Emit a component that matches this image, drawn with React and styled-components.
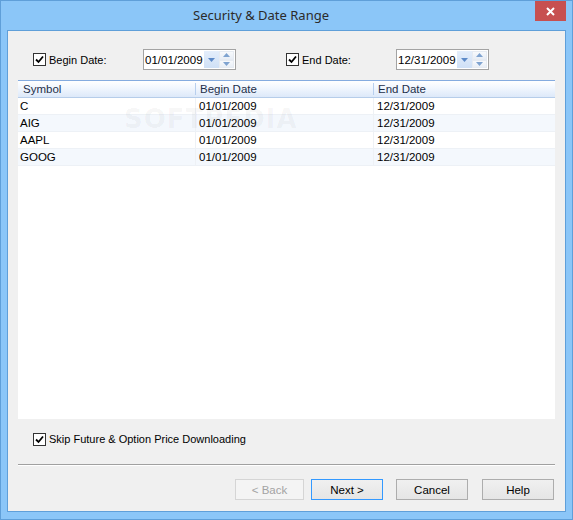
import React from "react";
import styled, { createGlobalStyle } from "styled-components";

const GlobalStyle = createGlobalStyle`
  html, body {
    margin: 0;
    padding: 0;
    background: #ffffff;
  }
  body {
    font-family: "Liberation Sans", Arial, sans-serif;
    font-size: 11px;
    color: #000;
  }
`;

// ================= WINDOW FRAME =================
const Window = styled.div`
  width: 573px;
  height: 520px;
  box-sizing: border-box;
  background: #8bc6f8;
  border: 1px solid #5f9fd9;
  display: flex;
  flex-direction: column;
`;

const TitleBar = styled.div`
  position: relative;
  height: 29px;
  flex-shrink: 0;
  display: flex;
  align-items: center;
  justify-content: center;
  padding-right: 51px;
`;

const TitleText = styled.div`
  font-family: "Noto Sans", "Open Sans", sans-serif;
  font-size: 13px;
  color: #2b2b2b;
  margin-bottom: 1px;
`;

const CloseButton = styled.div`
  position: absolute;
  top: 0;
  right: 6px;
  width: 31px;
  height: 20px;
  background: #c75050;
  display: flex;
  align-items: center;
  justify-content: center;
`;

const Client = styled.div`
  flex: 1;
  margin: 0 6px 7px 6px;
  background: #f0f0f0;
  border: 1px solid #5f9fd9;
  display: flex;
  flex-direction: column;
  padding: 0 10px 0 10px;
`;

// ================= DATE ROW =================
const DateRow = styled.div`
  display: flex;
  align-items: center;
  height: 21px;
  margin-top: 18px;
  padding-left: 15px;
`;

const CheckLabel = styled.label`
  display: flex;
  align-items: center;
  gap: 3px;
  width: ${({ $width }) => $width || "auto"};
  flex-shrink: 0;
  color: #000;
`;

const Box = styled.span`
  width: 11px;
  height: 11px;
  border: 1px solid #333333;
  background: #ffffff;
  display: flex;
  align-items: center;
  justify-content: center;
`;

const DateBox = styled.div`
  width: 93px;
  height: 21px;
  box-sizing: border-box;
  border: 1px solid #a3a3a3;
  background: #fff;
  display: flex;
  align-items: stretch;
  margin-right: ${({ $mr }) => $mr || "0"};
  flex-shrink: 0;
`;

const DateText = styled.div`
  flex: 1;
  padding-left: 1px;
  display: flex;
  align-items: center;
  font-size: 11.5px;
`;

const DropBtn = styled.div`
  width: 15px;
  margin: 1px 0;
  background: linear-gradient(#e4eefb, #cfe0f6);
  display: flex;
  align-items: center;
  justify-content: center;
`;

const Spinner = styled.div`
  width: 15px;
  margin: 1px 1px 1px 0;
  display: flex;
  flex-direction: column;
`;

const SpinHalf = styled.div`
  flex: 1;
  background: linear-gradient(#f7f9fc, #e8eef6);
  border: 1px solid #e6ebf2;
  display: flex;
  align-items: center;
  justify-content: center;
`;

// ================= TABLE =================
const Table = styled.div`
  position: relative;
  margin-top: 10px;
  height: 339px;
  background: #fff;
  display: flex;
  flex-direction: column;
  overflow: hidden;
`;

const Columns = "177px 178px 1fr";

const HeaderRow = styled.div`
  display: grid;
  grid-template-columns: ${Columns};
  height: 18px;
  box-sizing: border-box;
  border-top: 1px solid #84abdf;
  border-bottom: 1px solid #b6cdea;
  background: linear-gradient(#ffffff 0%, #f2f7fe 40%, #dde9f9 100%);
`;

const HeaderCell = styled.div`
  display: flex;
  align-items: center;
  padding-left: ${({ $pl }) => $pl || "4px"};
  color: #1e2f4a;
  font-size: 11.5px;
  border-left: ${({ $first }) => ($first ? "none" : "1px solid #b8cfee")};
  margin: ${({ $first }) => ($first ? "0" : "2px 0")};
`;

const DataRow = styled.div`
  display: grid;
  grid-template-columns: ${Columns};
  height: 17px;
  box-sizing: border-box;
  background: ${({ $alt }) => ($alt ? "#f4f8fd" : "#ffffff")};
  border-bottom: 1px solid #edf1f6;
`;

const DataCell = styled.div`
  display: flex;
  align-items: center;
  font-size: 11.5px;
  padding-left: ${({ $pl }) => $pl || "3px"};
  border-left: ${({ $first }) => ($first ? "none" : "1px solid #eef1f5")};
`;

const Watermark = styled.div`
  position: absolute;
  left: 106px;
  top: 24px;
  font-family: "DejaVu Sans", sans-serif;
  font-weight: bold;
  font-size: 26px;
  letter-spacing: 1px;
  color: rgba(0, 0, 0, 0.04);
  pointer-events: none;
  user-select: none;
`;

// ================= BOTTOM =================
const SkipRow = styled.div`
  display: flex;
  align-items: center;
  height: 20px;
  margin-top: 10px;
  padding-left: 15px;
`;

const Separator = styled.div`
  height: 0;
  border-top: 1px solid #a0a0a0;
  border-bottom: 1px solid #ffffff;
  margin-top: 15px;
`;

const ButtonBar = styled.div`
  display: flex;
  justify-content: flex-end;
  gap: 7px;
  margin-top: 13px;
  padding-right: 1px;
`;

const Button = styled.div`
  width: ${({ $w }) => $w || "72px"};
  height: 21px;
  box-sizing: border-box;
  border: 1px solid
    ${({ $default, $disabled }) =>
      $default ? "#3399ff" : $disabled ? "#d5d5d5" : "#adadad"};
  background: ${({ $disabled }) =>
    $disabled ? "#f4f4f4" : "linear-gradient(#f0f0f0, #e5e5e5)"};
  color: ${({ $disabled }) => ($disabled ? "#a3a3a3" : "#000")};
  font-size: 11.5px;
  display: flex;
  align-items: center;
  justify-content: center;
  margin-left: ${({ $ml }) => $ml || "0"};
`;

// ================= ICONS =================
const Check = () => (
  <svg width="9" height="9" viewBox="0 0 9 9">
    <path d="M1 4.5 L3.5 7 L8 1.5" fill="none" stroke="#000" strokeWidth="1.8" />
  </svg>
);

const Tri = ({ up, color = "#5d8ac8" }) => (
  <svg width="7" height="4" viewBox="0 0 7 4">
    <path d={up ? "M0 4 L3.5 0 L7 4 Z" : "M0 0 L7 0 L3.5 4 Z"} fill={color} />
  </svg>
);

const CheckBox = ({ label, width }) => (
  <CheckLabel $width={width}>
    <Box>
      <Check />
    </Box>
    {label}
  </CheckLabel>
);

const DatePicker = ({ value, mr }) => (
  <DateBox $mr={mr}>
    <DateText>{value}</DateText>
    <DropBtn>
      <Tri />
    </DropBtn>
    <Spinner>
      <SpinHalf>
        <Tri up color="#7fa3d0" />
      </SpinHalf>
      <SpinHalf>
        <Tri color="#7fa3d0" />
      </SpinHalf>
    </Spinner>
  </DateBox>
);

const rows = [
  ["C", "01/01/2009", "12/31/2009"],
  ["AIG", "01/01/2009", "12/31/2009"],
  ["AAPL", "01/01/2009", "12/31/2009"],
  ["GOOG", "01/01/2009", "12/31/2009"],
];

// ================= COMPONENT =================
export default function App() {
  return (
    <>
      <GlobalStyle />
      <Window>
        <TitleBar>
          <TitleText>Security &amp; Date Range</TitleText>
          <CloseButton>
            <svg width="9" height="9" viewBox="0 0 9 9">
              <path d="M1 1 L8 8 M8 1 L1 8" stroke="#fff" strokeWidth="2" />
            </svg>
          </CloseButton>
        </TitleBar>

        <Client>
          <DateRow>
            <CheckBox label="Begin Date:" width="110px" />
            <DatePicker value="01/01/2009" mr="50px" />
            <CheckBox label="End Date:" width="110px" />
            <DatePicker value="12/31/2009" />
          </DateRow>

          <Table>
            <HeaderRow>
              <HeaderCell $first $pl="5px">Symbol</HeaderCell>
              <HeaderCell>Begin Date</HeaderCell>
              <HeaderCell>End Date</HeaderCell>
            </HeaderRow>
            {rows.map((r, i) => (
              <DataRow key={r[0]} $alt={i % 2 === 1}>
                <DataCell $first $pl="2px">{r[0]}</DataCell>
                <DataCell>{r[1]}</DataCell>
                <DataCell>{r[2]}</DataCell>
              </DataRow>
            ))}
            <Watermark aria-hidden="true">SOFTPEDIA</Watermark>
          </Table>

          <SkipRow>
            <CheckBox label="Skip Future & Option Price Downloading" />
          </SkipRow>

          <Separator />

          <ButtonBar>
            <Button $w="69px" $disabled>&lt; Back</Button>
            <Button $default>Next &gt;</Button>
            <Button $ml="6px">Cancel</Button>
            <Button $ml="7px">Help</Button>
          </ButtonBar>
        </Client>
      </Window>
    </>
  );
}
